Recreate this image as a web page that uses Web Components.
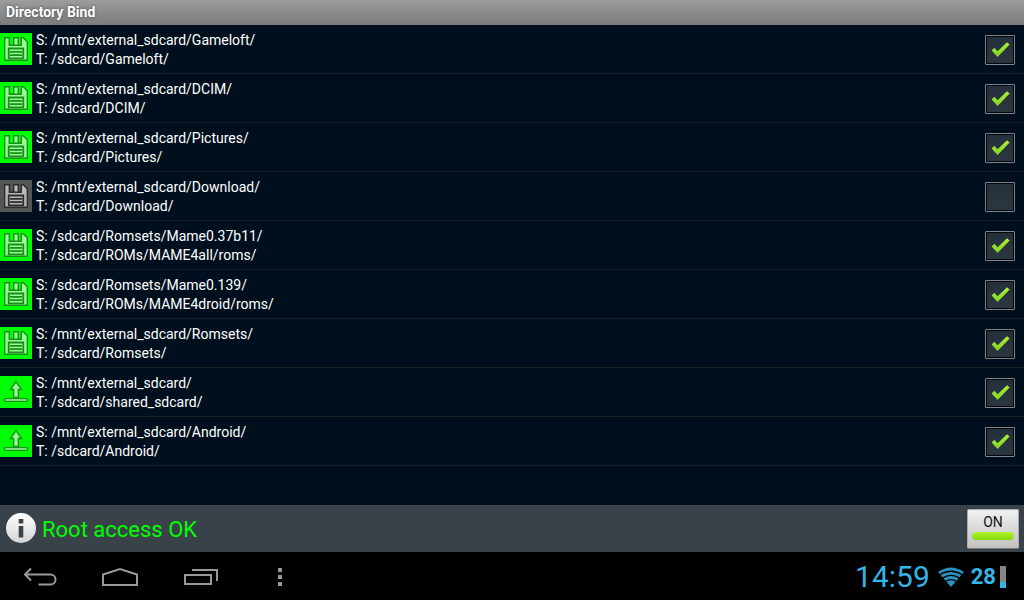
<!DOCTYPE html>
<html lang="en">
<head>
<meta charset="utf-8">
<title>Directory Bind</title>
<style>
html, body { margin: 0; height: 100%; background: #000; }
body { font-family: Roboto, "Noto Sans", sans-serif; color: #fff; }
</style>
</head>
<body>
<directory-bind-app></directory-bind-app>
<script>
const define = (name, html, setup) => {
  const template = document.createElement('template');
  template.innerHTML = html;
  customElements.define(name, class extends HTMLElement {
    constructor() {
      super();
      this.attachShadow({ mode: 'open' }).append(template.content.cloneNode(true));
    }
    connectedCallback() { if (setup) setup(this, this.shadowRoot); }
  });
};

define('title-bar', `
<style>
:host { display: block; background: linear-gradient(#9c9c9c, #7b7b7b); }
h1 { margin: 0; padding: 0 6px; font-size: 14px; line-height: 25px; font-weight: 700; text-shadow: 0 0 3px #444; }
</style>
<h1><slot></slot></h1>`);

define('bind-icon', `
<style>
:host { display: block; width: 32px; height: 32px; background: #0f0; --fill: #98fb98; --line: #169016; }
:host([off]) { background: #555; --fill: #b9b9b9; --line: #2c2c2c; }
svg { display: none; fill: var(--fill); stroke: var(--line); stroke-width: 1.4; }
:host([kind="disk"]) .disk, :host([kind="upload"]) .upload { display: block; }
</style>
<svg class="disk" width="32" height="32" viewBox="0 0 32 32" aria-hidden="true">
  <path d="M4.7 4.7H9.3V12.3H21.3V4.7H23.3L27.3 8.7V27.3H4.7Z"/>
  <path d="M13.7 4.7H18.3V12.3H13.7Z"/>
  <path stroke-width="1.8" d="M8.7 15.5H23.3V25.3H8.7ZM10 18.8H22M10 22.1H22"/>
</svg>
<svg class="upload" width="32" height="32" viewBox="0 0 32 32" aria-hidden="true">
  <path d="M16 5.6L21.5 13.5H18.4V21.4H13.6V13.5H10.5Z"/>
  <rect x="4.5" y="22.6" width="23" height="2.8" rx="1"/>
</svg>`);

define('check-box', `
<style>
:host { display: block; }
label { display: grid; width: 30px; height: 30px; }
input, svg { grid-area: 1 / 1; }
input { appearance: none; box-sizing: border-box; margin: 0; width: 30px; height: 30px; border: 1px solid #7c8288; border-radius: 1px; background: linear-gradient(#23303c, #2b3640); box-shadow: inset 0 0 0 1px #02060b; }
svg { display: none; pointer-events: none; }
input:checked + svg { display: block; }
</style>
<label>
  <input type="checkbox">
  <svg width="30" height="30" viewBox="0 0 30 30" aria-hidden="true">
    <defs><linearGradient id="g" x2="0" y2="1"><stop stop-color="#b4ee3c"/><stop offset="1" stop-color="#7ed321"/></linearGradient></defs>
    <path fill="url(#g)" d="M6.6 15.4L9.3 12.8L12.6 16.2L22 7.2L24.6 9.6L12.6 22Z"/>
  </svg>
</label>`, (el, root) => {
  const input = root.querySelector('input');
  input.checked = el.hasAttribute('checked');
  input.setAttribute('aria-label', el.getAttribute('name'));
});

define('bind-row', `
<style>
:host { display: flex; align-items: center; height: 48px; padding-right: 9px; gap: 4px; border-bottom: 1px solid #1c2025; }
.paths { flex: 1; min-width: 0; padding-top: 1px; font-size: 14px; line-height: 19px; }
p { margin: 0; }
.state { padding-top: 2px; }
</style>
<div class="icon"></div>
<div class="paths"><p>S: <slot name="source"></slot></p><p>T: <slot name="target"></slot></p></div>
<div class="state"></div>`, (el, root) => {
  const mounted = el.hasAttribute('mounted');
  const target = el.querySelector('[slot=target]').textContent;
  root.querySelector('.icon').innerHTML = `<bind-icon kind="${el.getAttribute('kind')}"${mounted ? '' : ' off'}></bind-icon>`;
  root.querySelector('.state').innerHTML = `<check-box name="Bind ${target}"${mounted ? ' checked' : ''}></check-box>`;
});

define('toggle-button', `
<style>
:host { display: block; }
button { display: flex; flex-direction: column; align-items: center; box-sizing: border-box; width: 52px; height: 40px; padding: 3px 4px 0; gap: 1px; border: 1px solid #aaa; border-bottom-color: #777; border-radius: 2px; background: linear-gradient(#f0f0f0, #c2c2c2); font-family: inherit; font-size: 14px; line-height: 18px; color: #111; }
.light { width: 100%; height: 8px; border-radius: 4px; background: linear-gradient(#b2f62c, #82d80c); }
</style>
<button type="button" aria-pressed="true"><slot></slot><span class="light"></span></button>`);

define('status-bar', `
<style>
:host { display: flex; align-items: center; height: 47px; padding: 0 5px 0 6px; gap: 6px; background: #394249; }
svg { flex: none; margin-bottom: 2px; }
.text { flex: 1; font-size: 22px; line-height: 28px; color: #0f0; padding-top: 3px; }
</style>
<svg width="30" height="30" viewBox="0 0 30 30" aria-hidden="true">
  <defs><linearGradient id="b" x2="0" y2="1"><stop stop-color="#fff"/><stop offset="1" stop-color="#d5d5d5"/></linearGradient></defs>
  <circle cx="15" cy="15" r="15" fill="url(#b)"/>
  <path fill="#394249" d="M12.7 6H17.3V10.6H12.7ZM12.7 13H17.3V24.4H12.7Z"/>
</svg>
<div class="text"><slot></slot></div>
<toggle-button>ON</toggle-button>`);

define('nav-bar', `
<style>
:host { display: flex; align-items: center; justify-content: space-between; height: 48px; background: #000; }
nav { display: flex; }
button { display: grid; place-items: center; box-sizing: border-box; width: 80px; height: 48px; padding: 2px 0 0; border: 0; background: none; }
svg { display: block; fill: none; stroke: #999; stroke-width: 2; }
.dots { fill: #999; stroke: none; }
.tray { display: flex; align-items: center; padding: 2px 18px 0 0; color: #33b5e5; }
.clock { font-size: 30px; line-height: 36px; margin-right: 7px; }
.wifi { stroke: none; fill: #2a92bd; margin-right: 6px; }
.wifi .gap { fill: none; stroke: #000; stroke-width: 1.4; }
.level { font-size: 22px; line-height: 28px; font-weight: 700; margin-right: 4px; }
.battery { width: 6px; height: 22px; background: linear-gradient(#858585 72%, #33b5e5 72%); }
</style>
<nav aria-label="System">
  <button type="button" aria-label="Back"><svg width="34" height="20" viewBox="0 0 34 20"><path d="M8 1.5L2 7.5L8 13.5M2 7.5H27.5A5 5 0 0 1 27.5 17.5H15.5"/></svg></button>
  <button type="button" aria-label="Home"><svg width="38" height="20" viewBox="0 0 38 20"><path d="M2 18H36V7.5L19 2L2 7.5Z"/></svg></button>
  <button type="button" aria-label="Recent apps"><svg width="36" height="18" viewBox="0 0 36 18"><path d="M3 7H29V16H3ZM10 2H35V13"/></svg></button>
  <button type="button" aria-label="Menu"><svg class="dots" width="4" height="18" viewBox="0 0 4 18"><path d="M0 0H4V4H0ZM0 7H4V11H0ZM0 14H4V18H0Z"/></svg></button>
</nav>
<div class="tray">
  <span class="clock">14:59</span>
  <svg class="wifi" width="28" height="20" viewBox="0 0 28 20" aria-hidden="true">
    <path d="M14 20L1 5Q14 -4 27 5Z"/>
    <path class="gap" d="M2 8Q14 0.5 26 8M5 11.4Q14 5.4 23 11.4M8 14.8Q14 10.4 20 14.8"/>
  </svg>
  <span class="level">28</span>
  <span class="battery"></span>
</div>`);

define('directory-bind-app', `
<style>
:host { display: flex; flex-direction: column; min-height: 100vh; background: #000f1e; }
main { flex: 1; }
</style>
<title-bar>Directory Bind</title-bar>
<main></main>
<status-bar>Root access OK</status-bar>
<nav-bar></nav-bar>`, (el, root) => {
  const binds = [
    ['disk', true, '/mnt/external_sdcard/Gameloft/', '/sdcard/Gameloft/'],
    ['disk', true, '/mnt/external_sdcard/DCIM/', '/sdcard/DCIM/'],
    ['disk', true, '/mnt/external_sdcard/Pictures/', '/sdcard/Pictures/'],
    ['disk', false, '/mnt/external_sdcard/Download/', '/sdcard/Download/'],
    ['disk', true, '/sdcard/Romsets/Mame0.37b11/', '/sdcard/ROMs/MAME4all/roms/'],
    ['disk', true, '/sdcard/Romsets/Mame0.139/', '/sdcard/ROMs/MAME4droid/roms/'],
    ['disk', true, '/mnt/external_sdcard/Romsets/', '/sdcard/Romsets/'],
    ['upload', true, '/mnt/external_sdcard/', '/sdcard/shared_sdcard/'],
    ['upload', true, '/mnt/external_sdcard/Android/', '/sdcard/Android/'],
  ];
  root.querySelector('main').innerHTML = binds.map(([kind, mounted, source, target]) =>
    `<bind-row kind="${kind}"${mounted ? ' mounted' : ''}><span slot="source">${source}</span><span slot="target">${target}</span></bind-row>`).join('');
});
</script>
</body>
</html>
